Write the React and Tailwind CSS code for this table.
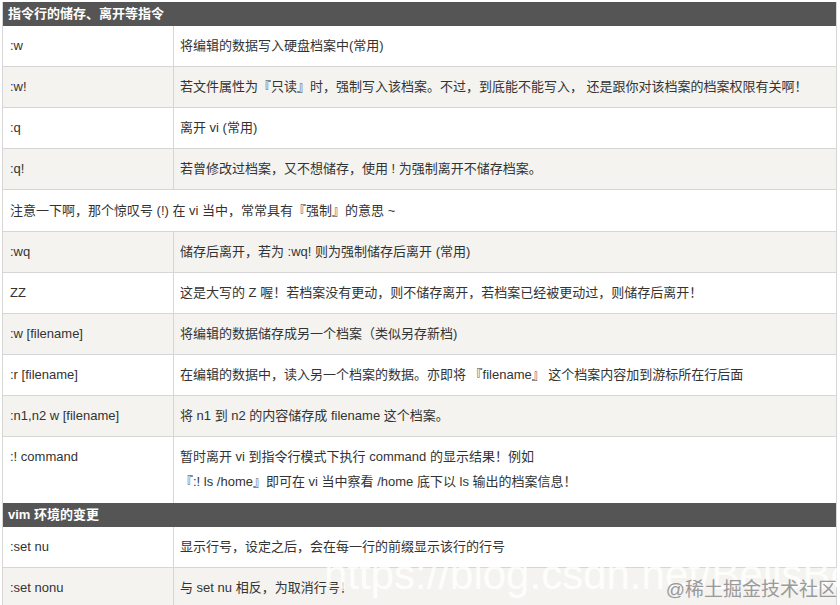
import React from 'react';

const rows1 = [
  [':w', '将编辑的数据写入硬盘档案中(常用)'],
  [':w!', '若文件属性为『只读』时，强制写入该档案。不过，到底能不能写入， 还是跟你对该档案的档案权限有关啊！'],
  [':q', '离开 vi (常用)'],
  [':q!', '若曾修改过档案，又不想储存，使用 ! 为强制离开不储存档案。'],
];

const rows2 = [
  [':wq', '储存后离开，若为 :wq! 则为强制储存后离开 (常用)'],
  ['ZZ', '这是大写的 Z 喔！若档案没有更动，则不储存离开，若档案已经被更动过，则储存后离开！'],
  [':w [filename]', '将编辑的数据储存成另一个档案（类似另存新档)'],
  [':r [filename]', '在编辑的数据中，读入另一个档案的数据。亦即将 『filename』 这个档案内容加到游标所在行后面'],
  [':n1,n2 w [filename]', '将 n1 到 n2 的内容储存成 filename 这个档案。'],
];

const rows3 = [
  [':set nu', '显示行号，设定之后，会在每一行的前缀显示该行的行号'],
  [':set nonu', '与 set nu 相反，为取消行号！'],
];

const Row = ({ cmd, desc, gray }) => (
  <div className={`flex h-[41px] border-b border-[#d6d6d6] ${gray ? 'bg-[#f4f3f0]' : 'bg-white'}`}>
    <div className="flex w-[171px] shrink-0 items-center border-r border-[#d6d6d6] px-[7px]">{cmd}</div>
    <div className="flex flex-1 items-center px-[6px]">{desc}</div>
  </div>
);

const Head = ({ children }) => (
  <div className="flex h-[24px] items-center bg-[#555555] px-[5px] font-bold text-white">{children}</div>
);

export default function App() {
  return (
    <div
      className="relative h-[605px] w-[840px] overflow-hidden bg-white pl-[2px] pt-[2px] text-[13px] leading-[20px] text-[#333333]"
      style={{ fontFamily: '"Liberation Sans", "Noto Sans CJK SC", sans-serif' }}
    >
      <div className="w-[835px] border-x border-[#d6d6d6]">
        <Head>指令行的储存、离开等指令</Head>
        {rows1.map((r, i) => (
          <Row key={r[0]} cmd={r[0]} desc={r[1]} gray={i % 2 === 1} />
        ))}
        <div className="flex h-[42px] items-center border-b border-[#d6d6d6] bg-white px-[7px]">
          注意一下啊，那个惊叹号 (!) 在 vi 当中，常常具有『强制』的意思 ~
        </div>
        {rows2.map((r, i) => (
          <Row key={r[0]} cmd={r[0]} desc={r[1]} gray={i % 2 === 0} />
        ))}
        <div className="flex h-[66px] bg-white">
          <div className="w-[171px] shrink-0 border-r border-[#d6d6d6] px-[7px] pt-[10px]">:! command</div>
          <div className="flex-1 px-[6px] pt-[10px] leading-[25px]">
            <div className="leading-[20px]">暂时离开 vi 到指令行模式下执行 command 的显示结果！例如</div>
            <div className="mt-[5px] leading-[20px]">『:! ls /home』即可在 vi 当中察看 /home 底下以 ls 输出的档案信息！</div>
          </div>
        </div>
        <Head>vim 环境的变更</Head>
        {rows3.map((r, i) => (
          <Row key={r[0]} cmd={r[0]} desc={r[1]} gray={i % 2 === 1} />
        ))}
      </div>

      <div className="pointer-events-none absolute left-[324px] top-[550px] whitespace-nowrap text-[42px] leading-[50px] text-white/80">
        https://blog.csdn.net/BellsBel
      </div>
      <div className="pointer-events-none absolute right-[3px] top-[578px] whitespace-nowrap text-[19px] leading-[24px] text-[#9a9a9a]">
        @稀土掘金技术社区
      </div>
    </div>
  );
}
